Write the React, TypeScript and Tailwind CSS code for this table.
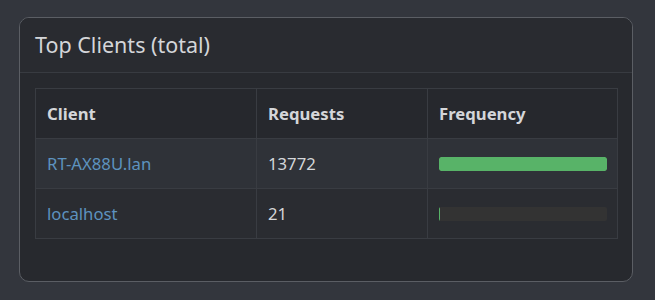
const rows = [
  { client: "RT-AX88U.lan", requests: 13772 },
  { client: "localhost", requests: 21 },
];

export default function App() {
  const max = Math.max(...rows.map((r) => r.requests));
  return (
    <div
      className="w-[655px] h-[300px] bg-[#33363d] pt-[17px] pl-[19px] pr-[22px]"
      style={{ fontFamily: '"Noto Sans", "Open Sans", sans-serif' }}
    >
      <div className="h-[265px] rounded-[10px] border border-[#5b5e64] bg-[#27292e] overflow-hidden">
        <div className="h-[55px] border-b border-[#383b41] bg-[#292b30] px-[15px] flex items-center">
          <h2 className="text-[21.5px] text-[#d4d6d9] font-normal">Top Clients (total)</h2>
        </div>
        <div className="px-[15px] pt-[15px]">
          <table className="w-[583px] border-collapse text-[16.7px] table-fixed">
            <colgroup>
              <col className="w-[221px]" />
              <col className="w-[171px]" />
              <col />
            </colgroup>
            <thead>
              <tr className="h-[50px] bg-[#26282d]">
                <th className="border border-[#393c42] px-[11px] text-left font-bold text-[#d4d6d9]">Client</th>
                <th className="border border-[#393c42] px-[11px] text-left font-bold text-[#d4d6d9]">Requests</th>
                <th className="border border-[#393c42] px-[11px] text-left font-bold text-[#d4d6d9]">Frequency</th>
              </tr>
            </thead>
            <tbody>
              {rows.map((r, i) => (
                <tr key={r.client} className={i % 2 === 0 ? "h-[50px] bg-[#2f3238]" : "h-[50px] bg-[#2a2c31]"}>
                  <td className="border border-[#393c42] px-[11px] text-[#5d92bf]">{r.client}</td>
                  <td className="border border-[#393c42] px-[11px] text-[#d4d6d9]">{r.requests}</td>
                  <td className="border border-[#393c42] px-[11px]">
                    <div className="h-[14px] w-[168px] rounded-[2px] bg-[#333333] overflow-hidden">
                      <div
                        className="h-full bg-[#58b368] rounded-[2px]"
                        style={{ width: `${Math.max((r.requests / max) * 100, 0.8)}%` }}
                      />
                    </div>
                  </td>
                </tr>
              ))}
            </tbody>
          </table>
        </div>
      </div>
    </div>
  );
}
